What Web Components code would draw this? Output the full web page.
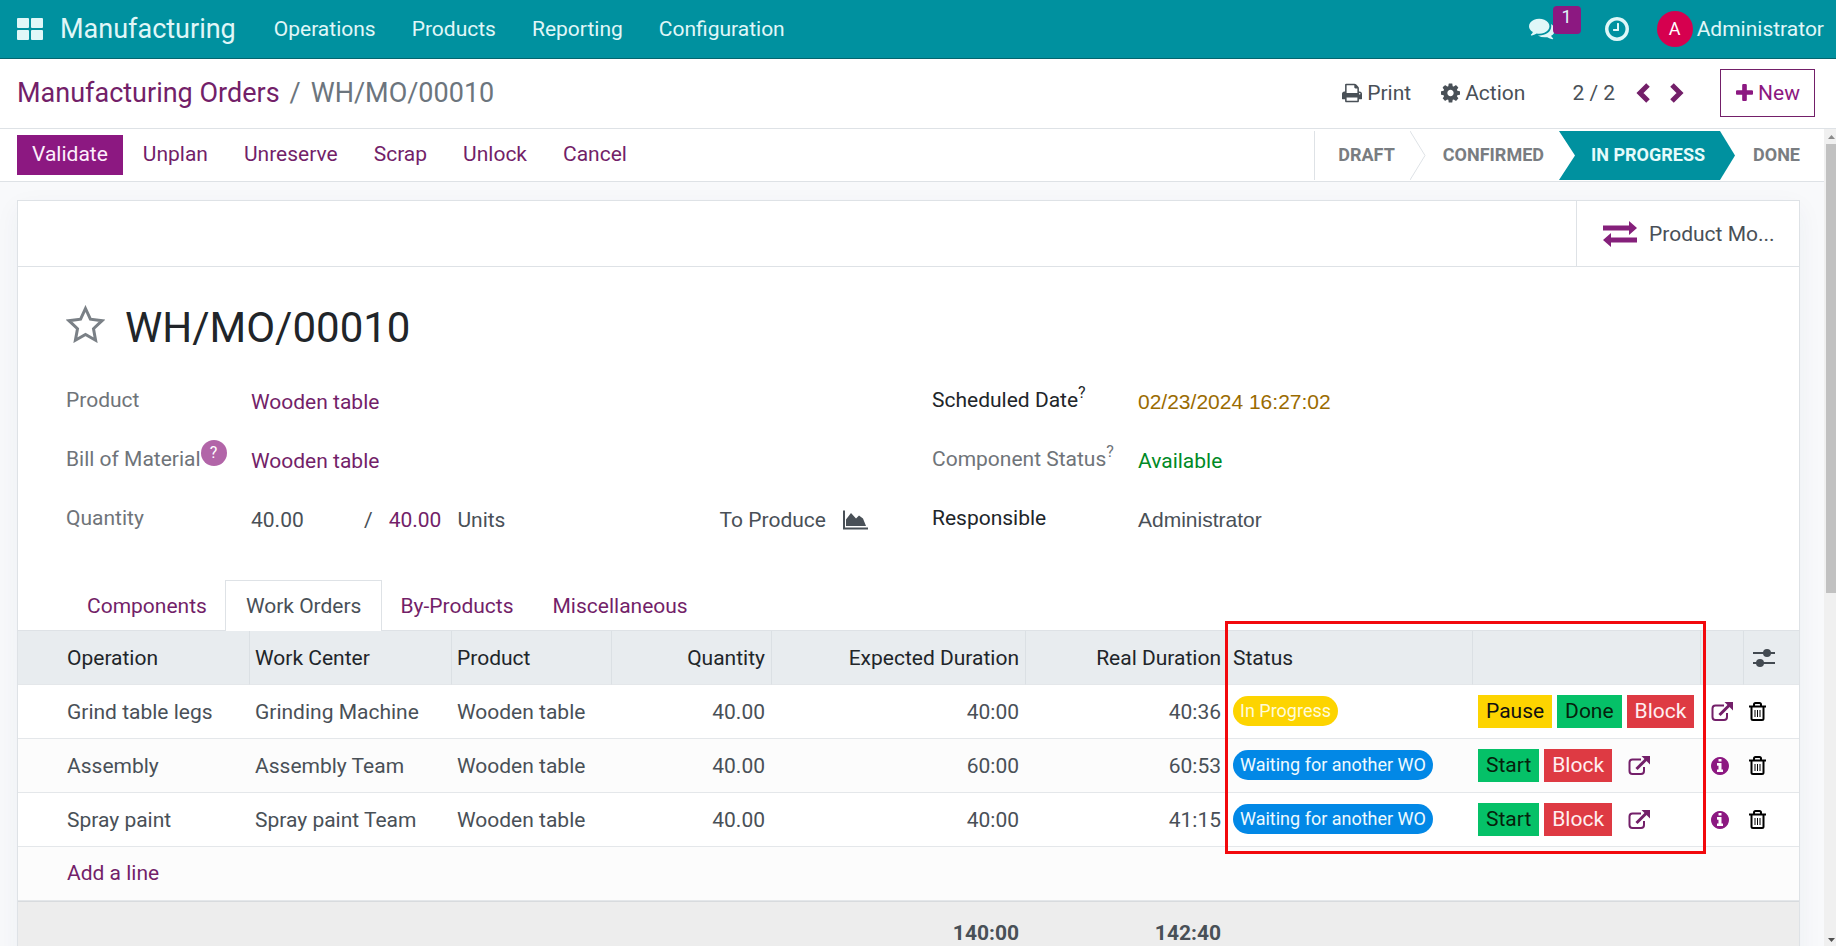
<!DOCTYPE html>
<html lang="en">
<head>
<meta charset="utf-8">
<title>WH/MO/00010 - Manufacturing</title>
<style>
    html, body {
        margin: 0;
        height: 100%;
        overflow: hidden;
    }
    body {
        font-family: Roboto, "Noto Sans", sans-serif;
        font-size: 21px;
        line-height: 32px;
        color: #495057;
        --teal: #00919f;
        --primary: #8c1881;
        --link: #731f69;
        --line: #dee2e6;
        --muted: #6f7479;
        --dark: #212529;
    }
</style>
</head>
<body>
<mrp-app></mrp-app>
<script>
const ICONS = {
    apps: ['0 0 26 22', '<rect width="12" height="10" rx="1"/><rect x="14" width="12" height="10" rx="1"/><rect y="12" width="12" height="10" rx="1"/><rect x="14" y="12" width="12" height="10" rx="1"/>'],
    comments: ['0 256 1792 1408', '<path d="M1408 768q0 139-94 257t-256.5 186.5-353.5 68.5q-86 0-176-16-124 88-278 128-36 9-86 16h-3q-11 0-20.5-8t-11.5-21q-1-3-1-6.5t.5-6.5 2-6l2.5-5 3.5-5.5 4-5 4.5-5 4-4.5q5-6 23-25t26-29.5 22.5-29 25-38.5 20.5-44q-124-72-195-177t-71-224q0-139 94-257t256.5-186.5 353.5-68.5 353.5 68.5 256.5 186.5 94 257zm384 256q0 120-71 224.5t-195 176.5q10 24 20.5 44t25 38.5 22.5 29 26 29.5 23 25q1 1 4 4.5t4.5 5 4 5 3.5 5.5l2.5 5 2 6 .5 6.5-1 6.5q-3 14-13 22t-22 7q-50-7-86-16-154-40-278-128-90 16-176 16-271 0-472-132 58 4 88 4 161 0 309-45t264-129q125-92 192-212t67-254q0-77-23-152 129 71 204 178t75 230z"/>'],
    clock: ['128 128 1536 1536', '<path d="M1024 544v448q0 14-9 23t-23 9h-320q-14 0-23-9t-9-23v-64q0-14 9-23t23-9h224v-352q0-14 9-23t23-9h64q14 0 23 9t9 23zm416 352q0-148-73-273t-198-198-273-73-273 73-198 198-73 273 73 273 198 198 273 73 273-73 198-198 73-273zm224 0q0 209-103 385.5t-279.5 279.5-385.5 103-385.5-103-279.5-279.5-103-385.5 103-385.5 279.5-279.5 385.5-103 385.5 103 279.5 279.5 103 385.5z"/>'],
    print: ['64 128 1664 1536', '<path d="M448 1536h896v-256h-896v256zm0-640h896v-384h-160q-40 0-68-28t-28-68v-160h-640v640zm1152 64q0-26-19-45t-45-19-45 19-19 45 19 45 45 19 45-19 19-45zm128 0v416q0 13-9.5 22.5t-22.5 9.5h-224v160q0 40-28 68t-68 28h-960q-40 0-68-28t-28-68v-160h-224q-13 0-22.5-9.5t-9.5-22.5v-416q0-79 56.5-135.5t135.5-56.5h64v-544q0-40 28-68t68-28h672q40 0 88 20t76 48l152 152q28 28 48 76t20 88v256h64q79 0 135.5 56.5t56.5 135.5z"/>'],
    cog: ['128 128 1536 1536', '<path d="M1152 896q0-106-75-181t-181-75-181 75-75 181 75 181 181 75 181-75 75-181zm512-109v222q0 12-8 23t-20 13l-185 28q-19 54-39 91 35 50 107 138 10 12 10 25t-9 23q-27 37-99 108t-94 71q-12 0-26-9l-138-108q-44 23-91 38-16 136-29 186-7 28-36 28h-222q-14 0-24.5-8.5t-11.5-21.5l-28-184q-49-16-90-37l-141 107q-10 9-25 9-14 0-25-11-126-114-165-168-7-10-7-23 0-12 8-23 15-21 51-66.5t54-70.5q-27-50-41-99l-183-27q-13-2-21-12.5t-8-23.5v-222q0-12 8-23t19-13l186-28q14-46 39-92-40-57-107-138-10-12-10-24 0-10 9-23 26-36 98.5-107.5t94.5-71.5q13 0 26 10l138 107q44-23 91-38 16-136 29-186 7-28 36-28h222q14 0 24.5 8.5t11.5 21.5l28 184q49 16 90 37l142-107q9-9 24-9 13 0 25 10 129 119 165 170 7 8 7 22 0 12-8 23-15 21-51 66.5t-54 70.5q26 50 41 98l183 28q13 2 21 12.5t8 23.5z"/>'],
    plus: ['192 128 1408 1408', '<path d="M1600 736v192q0 40-28 68t-68 28h-416v416q0 40-28 68t-68 28h-192q-40 0-68-28t-28-68v-416h-416q-40 0-68-28t-28-68v-192q0-40 28-68t68-28h416v-416q0-40 28-68t68-28h192q40 0 68 28t28 68v416h416q40 0 68 28t28 68z"/>'],
    prev: ['0 0 14 20', '<path d="M12 2L4 10l8 8" fill="none" stroke="currentColor" stroke-width="5"/>'],
    next: ['0 0 14 20', '<path d="M2 2l8 8-8 8" fill="none" stroke="currentColor" stroke-width="5"/>'],
    exchange: ['0 0 34 26', '<path d="M0 4.500h26V0l8 7-8 7V9.500H0zM34 16.500H8V12l-8 7 8 7v-4.500h26z"/>'],
    star: ['0 0 39 38', '<path d="M19.500 3.500l4.900 10.700 11.600 1.500-8.500 8 2.100 11.500-10.100-5.700-10.100 5.700 2.100-11.500-8.500-8 11.600-1.500z" fill="none" stroke="currentColor" stroke-width="3"/>'],
    chart: ['0 0 25 19', '<path d="M0 0h2v17h23v2H0z"/><path d="M3 15.500V9l5-6.500L13 8l3-3 4 3 3 7.500z"/>'],
    external: ['0 0 22 20', '<path d="M13 3.500H4.500a3 3 0 0 0-3 3V15a3 3 0 0 0 3 3H13a3 3 0 0 0 3-3v-4" fill="none" stroke="currentColor" stroke-width="2"/><path d="M8.500 13L18.500 3" fill="none" stroke="currentColor" stroke-width="3"/><path d="M13.500 0H22v8.500z"/>'],
    info: ['128 128 1536 1536', '<path d="M1152 1376v-160q0-14-9-23t-23-9h-96v-512q0-14-9-23t-23-9h-320q-14 0-23 9t-9 23v160q0 14 9 23t23 9h96v320h-96q-14 0-23 9t-9 23v160q0 14 9 23t23 9h448q14 0 23-9t9-23zm-128-896v-160q0-14-9-23t-23-9h-192q-14 0-23 9t-9 23v160q0 14 9 23t23 9h192q14 0 23-9t9-23zm640 416q0 209-103 385.5t-279.5 279.5-385.5 103-385.5-103-279.5-279.5-103-385.5 103-385.5 279.5-279.5 385.5-103 385.5 103 279.5 279.5 103 385.5z"/>'],
    trash: ['0 0 17 19', '<path d="M0 4.500h17M5 4V2.500a1.500 1.500 0 0 1 1.500-1.500h4A1.500 1.500 0 0 1 12 2.500V4M2.500 5v11.500A1.500 1.500 0 0 0 4 18h9a1.500 1.500 0 0 0 1.500-1.500V5" fill="none" stroke="currentColor" stroke-width="2"/><path d="M6 8v7M8.500 8v7M11 8v7" fill="none" stroke="currentColor"/>'],
    sliders: ['0 0 22 18', '<path d="M0 4h22M0 14h22" stroke="currentColor" stroke-width="2"/><circle cx="14" cy="4" r="4"/><circle cx="7" cy="14" r="4"/>'],
};

class MrpIcon extends HTMLElement {
    constructor() {
        super();
        this.attachShadow({ mode: 'open' });
    }
    connectedCallback() {
        const [box, body] = ICONS[this.getAttribute('name')];
        this.shadowRoot.innerHTML = `
        <style>
        :host {
            display: inline-flex;
            flex: none;
            width: 20px;
            height: 20px;
        }
        svg {
            width: 100%;
            height: 100%;
        }
        </style>
        <svg viewBox="${box}" fill="currentColor" aria-hidden="true">${body}</svg>
        `;
    }
}

class MrpNavbar extends HTMLElement {
    constructor() {
        super();
        this.attachShadow({ mode: 'open' }).innerHTML = this.initHtml();
    }
    initHtml() {
        return `
        <style>
        :host {
            display: flex;
            align-items: center;
            height: 58px;
            padding: 0 12px 0 17px;
            background: var(--teal);
            border-bottom: 1px solid #04656e;
            color: #e0f7f8;
        }
        a {
            color: inherit;
            text-decoration: none;
        }
        button {
            display: flex;
            position: relative;
            align-items: center;
            padding: 0;
            border: 0;
            background: none;
            color: inherit;
            font: inherit;
        }
        .apps {
            width: 26px;
            height: 22px;
        }
        .brand {
            margin: 0 38px 0 17px;
            font-size: 27px;
        }
        nav {
            display: flex;
            gap: 36px;
            flex: 1;
        }
        .comments {
            width: 26px;
            height: 22px;
        }
        .count {
            position: absolute;
            left: 24px;
            top: -12px;
            width: 28px;
            height: 28px;
            border-radius: 4px;
            background: var(--primary);
            font-size: 18px;
            line-height: 22px;
            text-align: center;
        }
        .clock {
            width: 24px;
            height: 24px;
            margin: 0 28px 0 50px;
        }
        .avatar {
            width: 36px;
            height: 36px;
            margin-right: 4px;
            border-radius: 50%;
            background: #d6004f;
            color: #fff;
            font-size: 18px;
            line-height: 36px;
            text-align: center;
        }
        </style>
        <button aria-label="Apps"><mrp-icon name="apps" class="apps"></mrp-icon></button>
        <a href="#" class="brand">Manufacturing</a>
        <nav>
            <a href="#">Operations</a>
            <a href="#">Products</a>
            <a href="#">Reporting</a>
            <a href="#">Configuration</a>
        </nav>
        <button aria-label="Messages"><mrp-icon name="comments" class="comments"></mrp-icon><span class="count">1</span></button>
        <button aria-label="Activities"><mrp-icon name="clock" class="clock"></mrp-icon></button>
        <button><span class="avatar">A</span>Administrator</button>
        `;
    }
}

class MrpControlPanel extends HTMLElement {
    constructor() {
        super();
        this.attachShadow({ mode: 'open' }).innerHTML = this.initHtml();
    }
    initHtml() {
        return `
        <style>
        :host {
            display: flex;
            align-items: center;
            height: 67px;
            padding: 0 21px 2px 17px;
            background: #fff;
            border-bottom: 1px solid var(--line);
        }
        .crumbs {
            display: flex;
            flex: 1;
            gap: 10px;
            font-size: 27px;
            color: #6c757d;
        }
        a {
            color: var(--link);
            text-decoration: none;
        }
        button {
            display: flex;
            align-items: center;
            gap: 5px;
            padding: 0;
            border: 0;
            background: none;
            color: inherit;
            font: inherit;
        }
        .action {
            margin: 0 47px 0 30px;
        }
        .action mrp-icon {
            width: 19px;
        }
        .pager {
            margin-right: 21px;
        }
        .arrow {
            margin-right: 20px;
            color: var(--link);
        }
        .arrow mrp-icon {
            width: 14px;
        }
        .new {
            height: 48px;
            margin-left: 16px;
            padding: 0 14px 0 15px;
            border: 1px solid var(--link);
            color: var(--primary);
        }
        .new mrp-icon {
            width: 17px;
            height: 17px;
        }
        </style>
        <div class="crumbs"><a href="#">Manufacturing Orders</a><span>/</span><span>WH/MO/00010</span></div>
        <button><mrp-icon name="print"></mrp-icon>Print</button>
        <button class="action"><mrp-icon name="cog"></mrp-icon>Action</button>
        <span class="pager">2 / 2</span>
        <button class="arrow" aria-label="Previous"><mrp-icon name="prev"></mrp-icon></button>
        <button class="arrow" aria-label="Next"><mrp-icon name="next"></mrp-icon></button>
        <button class="new"><mrp-icon name="plus"></mrp-icon>New</button>
        `;
    }
}

class MrpStatusbar extends HTMLElement {
    constructor() {
        super();
        this.attachShadow({ mode: 'open' }).innerHTML = this.initHtml();
    }
    initHtml() {
        return `
        <style>
        :host {
            display: flex;
            justify-content: space-between;
            height: 52px;
            padding-left: 17px;
            background: #fff;
            border-bottom: 1px solid var(--line);
        }
        .buttons {
            display: flex;
            align-items: center;
            gap: 4px;
        }
        button {
            height: 40px;
            padding: 0 16px 2px;
            border: 0;
            background: none;
            color: var(--link);
            font: inherit;
        }
        .primary {
            padding: 0 15px 2px;
            background: var(--primary);
            color: #fdeefb;
        }
        ol {
            display: flex;
            margin: 2px 0 1px;
            padding: 0;
            border-left: 1px solid var(--line);
            list-style: none;
            font-size: 18px;
            line-height: 47px;
            font-weight: 700;
            color: #797d81;
        }
        li {
            display: flex;
            padding-left: 17px;
        }
        li:first-child {
            padding-left: 23px;
        }
        li:last-child {
            padding-right: 24px;
        }
        li.current {
            margin-left: 15px;
            padding-left: 32px;
            background: var(--teal);
            color: #e6fbfb;
            clip-path: polygon(0 0, 100% 0, 100% 100%, 0 100%, 16px 50%);
        }
        svg {
            width: 16px;
            height: 49px;
            margin-left: 15px;
        }
        .current svg {
            background: #fff;
            fill: var(--teal);
        }
        </style>
        <div class="buttons">
            <button class="primary">Validate</button>
            <button>Unplan</button>
            <button>Unreserve</button>
            <button>Scrap</button>
            <button>Unlock</button>
            <button>Cancel</button>
        </div>
        <ol>
            <li>DRAFT<svg viewBox="0 0 16 49" aria-hidden="true"><path d="M0 0l15 24.500L0 49" fill="none" stroke="#dee2e6"/></svg></li>
            <li>CONFIRMED</li>
            <li class="current">IN PROGRESS<svg viewBox="0 0 16 49" aria-hidden="true"><path d="M0 0l15 24.500L0 49z"/></svg></li>
            <li>DONE</li>
        </ol>
        `;
    }
}

class MrpField extends HTMLElement {
    constructor() {
        super();
        this.attachShadow({ mode: 'open' });
    }
    connectedCallback() {
        const help = this.getAttribute('help');
        this.shadowRoot.innerHTML = `
        <style>
        :host {
            display: grid;
            grid-template-columns: var(--label-width) 1fr;
            height: 59px;
        }
        .label {
            color: var(--muted);
            white-space: nowrap;
        }
        :host([strong]) .label {
            color: var(--dark);
        }
        sup {
            font-size: 16px;
            line-height: 0;
            vertical-align: 9px;
        }
        :host([help="badge"]) sup {
            display: inline-block;
            position: relative;
            top: -8px;
            width: 26px;
            height: 26px;
            margin-top: -4px;
            border-radius: 50%;
            background: #b265a8;
            color: #fff;
            line-height: 26px;
            text-align: center;
            vertical-align: 0;
        }
        .value {
            display: flex;
            padding-top: 2px;
        }
        </style>
        <div class="label">${this.getAttribute('label')}${help ? '<sup>?</sup>' : ''}</div>
        <div class="value"><slot></slot></div>
        `;
    }
}

class MrpBadge extends HTMLElement {
    constructor() {
        super();
        this.attachShadow({ mode: 'open' }).innerHTML = `
        <style>
        :host {
            display: inline-block;
            padding: 0 7px;
            border-radius: 15px;
            background: #0288e6;
            color: #eefaff;
            font-size: 18px;
            line-height: 30px;
            white-space: nowrap;
            vertical-align: top;
        }
        :host([kind="progress"]) {
            background: #fdd400;
            color: #fffbd8;
        }
        </style>
        <slot></slot>
        `;
    }
}

class MrpWorkorders extends HTMLElement {
    constructor() {
        super();
        this.attachShadow({ mode: 'open' }).innerHTML = this.initHtml();
    }
    row(name, center, expected, real, running) {
        const external = '<button class="icon" aria-label="Open work order"><mrp-icon name="external" class="external"></mrp-icon></button>';
        return `
            <tr>
                <td>${name}</td>
                <td>${center}</td>
                <td>Wooden table</td>
                <td class="num">40.00</td>
                <td class="num">${expected}</td>
                <td class="num">${real}</td>
                <td>${running ? '<mrp-badge kind="progress">In Progress</mrp-badge>' : '<mrp-badge>Waiting for another WO</mrp-badge>'}</td>
                <td><div class="actions">${running
                    ? '<button class="pause">Pause</button><button class="go">Done</button><button class="block">Block</button>'
                    : '<button class="go">Start</button><button class="block">Block</button>' + external}</div></td>
                <td class="tool">${running ? external : '<button class="icon" aria-label="Details"><mrp-icon name="info" class="info"></mrp-icon></button>'}</td>
                <td><button class="icon" aria-label="Delete"><mrp-icon name="trash" class="trash"></mrp-icon></button></td>
            </tr>`;
    }
    initHtml() {
        return `
        <style>
        :host {
            display: block;
            position: relative;
        }
        table {
            width: 100%;
            table-layout: fixed;
            border-collapse: separate;
            border-spacing: 0;
        }
        th, td {
            box-sizing: border-box;
            height: 54px;
            padding: 0 6px;
            border-bottom: 1px solid #e4e7ea;
            text-align: left;
            font-weight: 400;
            white-space: nowrap;
        }
        th {
            background: #e8ecef;
            color: var(--dark);
        }
        th + th {
            padding-left: 5px;
            border-left: 1px solid #dbe0e4;
        }
        th:first-child, td:first-child {
            padding-left: 49px;
        }
        tbody tr:nth-child(even) {
            background: #fcfcfc;
        }
        .num {
            text-align: right;
        }
        .actions {
            display: flex;
            align-items: center;
            gap: 5px;
        }
        button {
            padding: 0 8px;
            border: 0;
            font: inherit;
            color: inherit;
            line-height: 33px;
        }
        .pause {
            background: #fdd400;
            color: #111;
        }
        .go {
            background: #05c168;
            color: #06210c;
        }
        .block {
            background: #de3a43;
            color: #ffeef0;
        }
        .icon, .link {
            padding: 0;
            background: none;
        }
        .icon {
            display: flex;
            color: var(--link);
        }
        .link {
            color: var(--link);
        }
        .external {
            width: 22px;
        }
        .actions .external {
            margin-left: 11px;
        }
        .tool {
            padding: 0 0 0 11px;
        }
        .info {
            width: 18px;
            color: var(--primary);
        }
        .trash {
            width: 17px;
            height: 19px;
            color: #000;
        }
        .sliders {
            width: 22px;
            height: 18px;
            margin-left: 4px;
            color: #434a51;
        }
        tfoot td {
            height: 63px;
            border-top: 1px solid #d8dbde;
            border-bottom: 0;
            background: #ededed;
            font-weight: 700;
        }
        .highlight {
            position: absolute;
            left: 68%;
            right: 5%;
            top: -10px;
            height: 227px;
            margin: 0 4px 0 -4px;
            border: 3px solid #f2090d;
            pointer-events: none;
        }
        </style>
        <table>
            <colgroup>
                <col style="width:231px"><col style="width:202px"><col style="width:160px"><col style="width:160px"><col style="width:254px">
                <col style="width:202px"><col style="width:245px"><col style="width:228px"><col style="width:43px"><col style="width:56px">
            </colgroup>
            <thead>
                <tr>
                    <th>Operation</th>
                    <th>Work Center</th>
                    <th>Product</th>
                    <th class="num">Quantity</th>
                    <th class="num">Expected Duration</th>
                    <th class="num">Real Duration</th>
                    <th>Status</th>
                    <th></th>
                    <th></th>
                    <th><button class="icon" aria-label="Optional columns"><mrp-icon name="sliders" class="sliders"></mrp-icon></button></th>
                </tr>
            </thead>
            <tbody>
                ${this.row('Grind table legs', 'Grinding Machine', '40:00', '40:36', true)}
                ${this.row('Assembly', 'Assembly Team', '60:00', '60:53', false)}
                ${this.row('Spray paint', 'Spray paint Team', '40:00', '41:15', false)}
                <tr><td colspan="10"><button class="link">Add a line</button></td></tr>
            </tbody>
            <tfoot>
                <tr>
                    <td colspan="4"></td>
                    <td class="num">140:00</td>
                    <td class="num">142:40</td>
                    <td colspan="4"></td>
                </tr>
            </tfoot>
        </table>
        <div class="highlight"></div>
        `;
    }
}

class MrpSheet extends HTMLElement {
    constructor() {
        super();
        this.attachShadow({ mode: 'open' }).innerHTML = this.initHtml();
    }
    initHtml() {
        return `
        <style>
        :host {
            display: block;
            margin: 18px 24px 0 17px;
            border: 1px solid var(--line);
            background: #fff;
            box-shadow: 0 8px 24px rgba(40, 50, 90, .05);
        }
        button {
            padding: 0;
            border: 0;
            background: none;
            color: inherit;
            font: inherit;
        }
        a {
            color: var(--link);
            text-decoration: none;
        }
        .box {
            display: flex;
            justify-content: flex-end;
            height: 65px;
            border-bottom: 1px solid var(--line);
        }
        .box button {
            display: flex;
            align-items: center;
            gap: 12px;
            width: 223px;
            padding: 0 26px;
            border-left: 1px solid var(--line);
            white-space: nowrap;
        }
        .exchange {
            width: 34px;
            height: 26px;
            color: #85207b;
        }
        .title {
            display: flex;
            align-items: center;
            gap: 20px;
            margin: 36px 48px 0;
        }
        .star {
            width: 39px;
            height: 38px;
            color: #7a8086;
        }
        h1 {
            margin: 0;
            font-size: 42px;
            line-height: 50px;
            font-weight: 400;
            color: var(--dark);
        }
        .groups {
            display: grid;
            grid-template-columns: 866fr 819fr;
            margin: 31px 48px 0;
        }
        .left {
            --label-width: 185px;
        }
        .right {
            --label-width: 206px;
        }
        .quantity {
            display: flex;
            flex: 1;
            align-items: flex-start;
        }
        .quantity span:first-child {
            width: 113px;
        }
        .quantity a {
            margin: 0 16px;
        }
        .quantity .units {
            flex: 1;
        }
        .quantity button {
            display: flex;
            align-items: center;
            gap: 17px;
            margin-right: 64px;
        }
        .chart {
            width: 25px;
        }
        .input {
            font-family: "Liberation Sans", Arial, sans-serif;
        }
        .date {
            color: #9a6b01;
        }
        .ok {
            color: #008a26;
        }
        .tabs {
            display: flex;
            padding: 19px 48px 0;
            border-bottom: 1px solid var(--line);
        }
        .tabs button {
            height: 51px;
            padding: 0 20px;
            border: 1px solid transparent;
            border-bottom: 0;
            margin: 0 -3px -1px 0;
            color: var(--link);
        }
        .tabs .active {
            background: #fff;
            border-color: var(--line);
            color: inherit;
        }
        </style>
        <div class="box"><button><mrp-icon name="exchange" class="exchange"></mrp-icon>Product Mo...</button></div>
        <div class="title">
            <button aria-label="Priority"><mrp-icon name="star" class="star"></mrp-icon></button>
            <h1>WH/MO/00010</h1>
        </div>
        <div class="groups">
            <div class="left">
                <mrp-field label="Product"><a href="#">Wooden table</a></mrp-field>
                <mrp-field label="Bill of Material" help="badge"><a href="#">Wooden table</a></mrp-field>
                <mrp-field label="Quantity">
                    <div class="quantity">
                        <span>40.00</span><span>/</span><a href="#">40.00</a><span class="units">Units</span>
                        <button>To Produce<mrp-icon name="chart" class="chart"></mrp-icon></button>
                    </div>
                </mrp-field>
            </div>
            <div class="right">
                <mrp-field label="Scheduled Date" help="text" strong><span class="input date">02/23/2024 16:27:02</span></mrp-field>
                <mrp-field label="Component Status" help="text"><span class="ok">Available</span></mrp-field>
                <mrp-field label="Responsible" strong><span class="input">Administrator</span></mrp-field>
            </div>
        </div>
        <div class="tabs" role="tablist">
            <button role="tab">Components</button>
            <button role="tab" class="active" aria-selected="true">Work Orders</button>
            <button role="tab">By-Products</button>
            <button role="tab">Miscellaneous</button>
        </div>
        <mrp-workorders></mrp-workorders>
        `;
    }
}

class MrpScrollbar extends HTMLElement {
    constructor() {
        super();
        this.attachShadow({ mode: 'open' }).innerHTML = `
        <style>
        :host {
            display: flex;
            flex-direction: column;
            width: 12px;
            background: #f0f0f0;
        }
        svg {
            width: 12px;
            height: 15px;
        }
        .thumb {
            height: 55%;
            margin-left: 2px;
            background: #c1c1c1;
        }
        .space {
            flex: 1;
        }
        </style>
        <svg viewBox="0 0 12 15" fill="#8b8b8b" aria-hidden="true"><path d="M4 10l3.500-4 3.500 4z"/></svg>
        <div class="thumb"></div>
        <div class="space"></div>
        <svg viewBox="0 0 12 15" fill="#505050" aria-hidden="true"><path d="M4 7l3.500 4L11 7z"/></svg>
        `;
    }
}

class MrpApp extends HTMLElement {
    constructor() {
        super();
        this.attachShadow({ mode: 'open' }).innerHTML = `
        <style>
        :host {
            display: flex;
            flex-direction: column;
            height: 100vh;
            background: #f8f9fb;
        }
        .content {
            display: flex;
            flex: 1;
            min-height: 0;
        }
        main {
            flex: 1;
            min-width: 0;
            overflow: hidden;
        }
        </style>
        <mrp-navbar></mrp-navbar>
        <mrp-control-panel></mrp-control-panel>
        <div class="content">
            <main>
                <mrp-statusbar></mrp-statusbar>
                <mrp-sheet></mrp-sheet>
            </main>
            <mrp-scrollbar></mrp-scrollbar>
        </div>
        `;
    }
}

customElements.define('mrp-icon', MrpIcon);
customElements.define('mrp-navbar', MrpNavbar);
customElements.define('mrp-control-panel', MrpControlPanel);
customElements.define('mrp-statusbar', MrpStatusbar);
customElements.define('mrp-field', MrpField);
customElements.define('mrp-badge', MrpBadge);
customElements.define('mrp-workorders', MrpWorkorders);
customElements.define('mrp-sheet', MrpSheet);
customElements.define('mrp-scrollbar', MrpScrollbar);
customElements.define('mrp-app', MrpApp);
</script>
</body>
</html>
